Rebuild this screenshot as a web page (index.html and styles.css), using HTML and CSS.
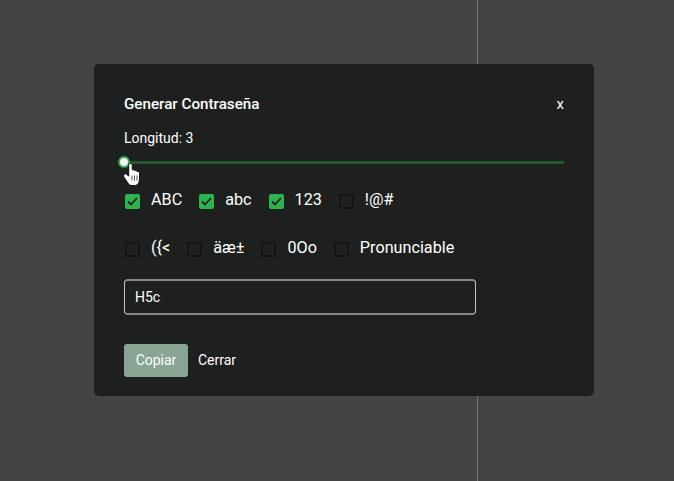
FILE: index.html
```html
<!DOCTYPE html>
<html lang="es">
<head>
  <meta charset="UTF-8" />
  <meta name="viewport" content="width=device-width, initial-scale=1" />
  <title>Generar Contraseña</title>
  <link rel="stylesheet" href="styles.css">
</head>
<body>
  <div class="divider"></div>
  <div class="modal">
    <div class="modal-header">
      <h2>Generar Contraseña</h2>
      <button class="close" type="button">x</button>
    </div>

    <div class="length-label">Longitud: 3</div>
    <div class="slider">
      <div class="slider-track"></div>
      <div class="slider-thumb"></div>
      <svg class="hand" width="17" height="23" viewBox="0 0 17 23">
        <path d="M7.5 .5C8.6 .5 9.3 1.3 9.3 2.4V7C10 6.3 11.4 6.5 11.7 7.7C12.4 7 13.8 7.4 14 8.6C14.8 8.1 16.5 8.6 16.5 10.4V15.5C16.5 20 14.5 22.5 11.5 22.5H9C7 22.5 5.8 21.5 4.8 20L.9 14C-.1 12 1.6 10 3.4 11.2L5.7 13V2.4C5.7 1.3 6.4 .5 7.5 .5Z" fill="#fff" stroke="#0c0c0c" stroke-width="1"/>
        <path d="M9 12.5V17.5M11.5 12.5V17.5M14 12.5V17.5" stroke="#555" stroke-width="1" fill="none"/>
      </svg>
    </div>

    <div class="options options-first">
      <label class="option"><span class="box checked"><svg width="11" height="9" viewBox="0 0 11 9"><path d="M1 4.5l3 3 6-6.5" fill="none" stroke="#1e2020" stroke-width="1.8"/></svg></span>ABC</label>
      <label class="option"><span class="box checked"><svg width="11" height="9" viewBox="0 0 11 9"><path d="M1 4.5l3 3 6-6.5" fill="none" stroke="#1e2020" stroke-width="1.8"/></svg></span>abc</label>
      <label class="option"><span class="box checked"><svg width="11" height="9" viewBox="0 0 11 9"><path d="M1 4.5l3 3 6-6.5" fill="none" stroke="#1e2020" stroke-width="1.8"/></svg></span>123</label>
      <label class="option"><span class="box"></span>!@#</label>
    </div>
    <div class="options">
      <label class="option"><span class="box"></span>({&lt;</label>
      <label class="option"><span class="box"></span>äæ±</label>
      <label class="option"><span class="box"></span>0Oo</label>
      <label class="option"><span class="box"></span>Pronunciable</label>
    </div>

    <div class="password">H5c</div>

    <div class="actions">
      <button class="btn-copy" type="button">Copiar</button>
      <button class="btn-close" type="button">Cerrar</button>
    </div>
  </div>
</body>
</html>
```

FILE: styles.css
```css
html, body { height: 100%; }

body {
  margin: 0;
  background: #444444;
  font-family: Roboto, "Liberation Sans", sans-serif;
  color: #fff;
  overflow: hidden;
  display: flex;
  justify-content: center;
  align-items: flex-start;
}

.divider {
  position: absolute;
  left: 477px;
  top: 0;
  bottom: 0;
  width: 1px;
  background: #757575;
}

.modal {
  position: relative;
  box-sizing: border-box;
  width: 500px;
  height: 332px;
  margin: 64px 0 0 14px;
  padding: 30px;
  background: #1e2020;
  border-radius: 5px;
}

.modal-header {
  display: flex;
  justify-content: space-between;
  align-items: center;
  height: 20px;
}

h2 {
  margin: 0;
  font-size: 15.2px;
  font-weight: 500;
}

.close {
  background: none;
  border: none;
  padding: 0;
  color: #fff;
  font-family: inherit;
  font-size: 15px;
}

.length-label {
  margin-top: 14px;
  font-size: 14px;
  line-height: 20px;
}

.slider {
  position: relative;
  height: 12px;
  margin-top: 8px;
}

.slider-track {
  position: absolute;
  left: 0;
  right: 0;
  top: 5px;
  height: 3px;
  background: #25562f;
}

.slider-thumb {
  position: absolute;
  left: -6px;
  top: 0;
  box-sizing: border-box;
  width: 12px;
  height: 12px;
  background: #f2f5f2;
  border: 2px solid #2fa650;
  border-radius: 50%;
}

.hand {
  position: absolute;
  left: -1px;
  top: 7px;
}

.options {
  display: flex;
  margin-top: 24px;
}

.options-first { margin-top: 20px; height: 24px; }

.option {
  display: flex;
  align-items: center;
  margin-right: 16px;
  font-size: 16.2px;
  line-height: 24px;
}

.box {
  box-sizing: border-box;
  display: flex;
  align-items: center;
  justify-content: center;
  width: 15px;
  height: 15px;
  margin: 3px 11px 0 1px;
  background: #1e2020;
  border: 2px solid #131414;
  border-radius: 2px;
}

.box.checked {
  background: #2fb350;
  border: none;
}

.password {
  box-sizing: border-box;
  width: 352px;
  height: 36px;
  margin-top: 19px;
  padding: 0 10px;
  border-style: solid;
  border-width: 2px 1px;
  border-color: #858886 #c4c7c5;
  border-radius: 4px;
  font-size: 14px;
  line-height: 32px;
}

.actions {
  display: flex;
  align-items: center;
  margin-top: 29px;
}

.btn-copy {
  width: 64px;
  height: 33px;
  padding: 0 0 2px;
  background: #89a593;
  color: #fff;
  border: none;
  border-radius: 3px;
  font-family: inherit;
  font-size: 14px;
}

.btn-close {
  margin-left: 10px;
  padding: 0 0 2px;
  background: none;
  border: none;
  color: #fff;
  font-family: inherit;
  font-size: 14px;
}
```
